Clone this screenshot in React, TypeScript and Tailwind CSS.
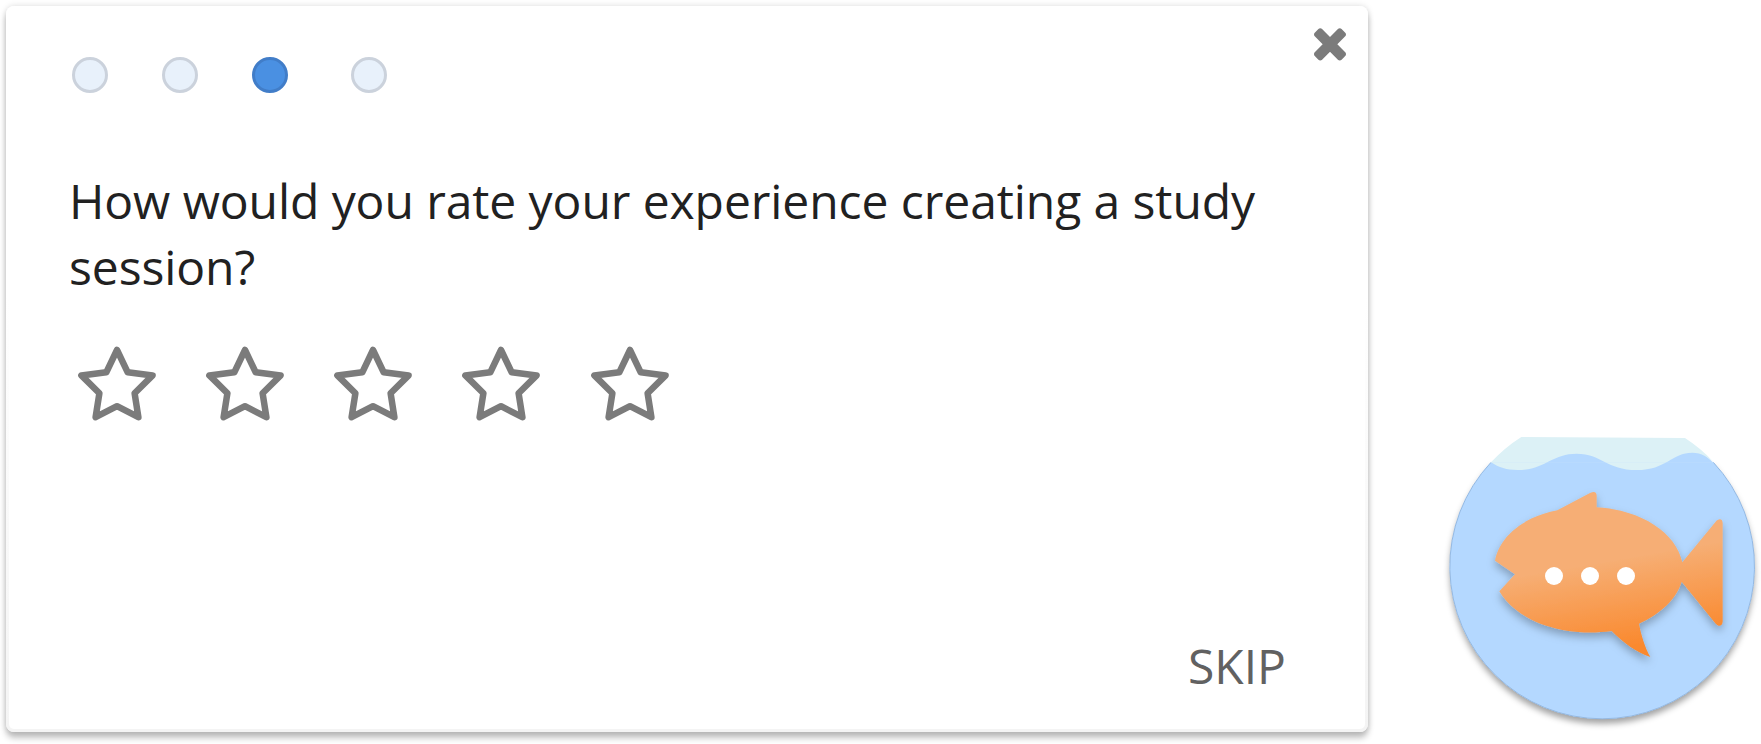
const STEPS = [
  { id: 1, gap: "", active: false },
  { id: 2, gap: "ml-[54px]", active: false },
  { id: 3, gap: "ml-[54px]", active: true },
  { id: 4, gap: "ml-[63px]", active: false },
];

const STARS = [
  { id: 1, gap: "" },
  { id: 2, gap: "ml-11" },
  { id: 3, gap: "ml-11" },
  { id: 4, gap: "ml-11" },
  { id: 5, gap: "ml-[45px]" },
];

function CloseIcon() {
  return (
    <svg className="block h-[33px] w-8" viewBox="302 238 1188 1212" preserveAspectRatio="none" fill="#7b7b7b">
      <path d="M1490 1322q0 40-28 68l-136 136q-28 28-68 28t-68-28l-294-294-294 294q-28 28-68 28t-68-28l-136-136q-28-28-28-68t28-68l294-294-294-294q-28-28-28-68t28-68l136-136q28-28 68-28t68 28l294 294 294-294q28-28 68-28t68 28l136 136q28 28 28 68t-28 68l-294 294 294 294q28 28 28 68z" transform="translate(0 -122)" />
    </svg>
  );
}

function StarIcon() {
  return (
    <svg className="block h-[84px] w-[84px]" viewBox="15 12 84 84" fill="none" stroke="#7b7b7b" strokeWidth="6.5" strokeLinejoin="round">
      <path d="M57 20L67.7 42.3L92.6 45.4L74.6 63.3L78.4 87.2L57 76.2L35.6 87.2L39.4 63.3L21.4 45.4L46.3 42.3Z" />
    </svg>
  );
}

function FishBowl() {
  return (
    <svg className="block h-[324px] w-[331px] shrink-0" viewBox="0 0 993 972">
      <defs>
        <linearGradient id="scales" gradientUnits="userSpaceOnUse" x1="500" y1="430" x2="545" y2="690">
          <stop offset="0" stopColor="#f6ae74" />
          <stop offset="1" stopColor="#fa892e" />
        </linearGradient>
        <filter id="fishShadow" x="-10%" y="-10%" width="120%" height="130%">
          <feDropShadow dx="0" dy="14" stdDeviation="12" floodColor="#000" floodOpacity="0.27" />
        </filter>
        <filter id="bowlShadow" x="-10%" y="-10%" width="120%" height="120%">
          <feDropShadow dx="0" dy="15" stdDeviation="9" floodColor="#000" floodOpacity="0.36" />
        </filter>
      </defs>
      <path d="M183 127A457 457 0 1 0 850 127Z" fill="#b4d8ff" filter="url(#bowlShadow)" />
      <path d="M183 127A457 457 0 1 0 850 127" fill="none" stroke="#94b9e3" strokeWidth="3" />
      <path d="M300 130V80H785L815 96L852 130Z" fill="#b4d8ff" />
      <path d="M274 51L765 54A457 457 0 0 1 850 125C835 113 815 98 787 98C725 98 710 150 620 150C530 150 515 101 440 101C365 101 345 150 262 150C230 150 207 143 183 127A457 457 0 0 1 274 51Z" fill="#dcf1f6" />
      <path d="M183 127H850" stroke="#c8e4fc" strokeWidth="2" opacity="0.35" />
      <g filter="url(#fishShadow)" fill="url(#scales)">
        <path d="M195 422C209 347 285 289 382 271L480 219Q500 210 500 228V262C636 270 739 340 757 427L857 305C865 296 877 294 878 309V605C877 620 865 620 857 611L755 485C741 534 694 581 627 611C633 643 645 683 661 711C617 696 582 670 545 633C400 653 261 604 208 514L255 463Z" />
      </g>
      <circle cx="372" cy="468" r="27" fill="#fff" />
      <circle cx="480" cy="468" r="27" fill="#fff" />
      <circle cx="588" cy="468" r="27" fill="#fff" />
    </svg>
  );
}

export default function App() {
  return (
    <div className="flex h-[744px] w-[1761px] items-end overflow-hidden bg-white font-['Open_Sans',sans-serif]">
      <main className="mb-3 ml-1.5 flex h-[726px] w-[1362px] shrink-0 flex-col rounded-lg border-x-[3px] border-b-[3px] border-transparent [background:linear-gradient(#fff,#fff)_padding-box,linear-gradient(#fff_40%,#f4f4f4)_border-box] shadow-[0_6px_6px_rgba(0,0,0,0.24),0_0_6px_rgba(0,0,0,0.14)]">
        <header className="flex justify-between pr-[19px] pl-[63px]">
          <div className="flex pt-[51px]">
            {STEPS.map((s) => (
              <span
                key={s.id}
                className={`${s.gap} h-9 w-9 rounded-full border-[3px] ${s.active ? "border-[#417dc8] bg-[#4a90e2]" : "border-[#cbd2dc] bg-[#e8f1fb]"}`}
              />
            ))}
          </div>
          <button aria-label="Close" className="mt-[22px] h-[33px] w-8">
            <CloseIcon />
          </button>
        </header>
        <h1 className="mt-[75px] ml-[60px] w-[1230px] text-[48px] leading-[66px] tracking-[-0.075px] text-[#212121]">
          How would you rate your experience creating a study session?
        </h1>
        <div className="mt-[42px] ml-[66px] flex">
          {STARS.map((s) => (
            <button key={s.id} aria-label={`${s.id}`} className={s.gap}>
              <StarIcon />
            </button>
          ))}
        </div>
        <footer className="mt-auto flex justify-end pr-[79px] pb-[30px]">
          <button className="text-[48px] leading-[66px] text-[#616161]">SKIP</button>
        </footer>
      </main>
      <aside className="ml-[62px] shrink-0">
        <FishBowl />
      </aside>
    </div>
  );
}
